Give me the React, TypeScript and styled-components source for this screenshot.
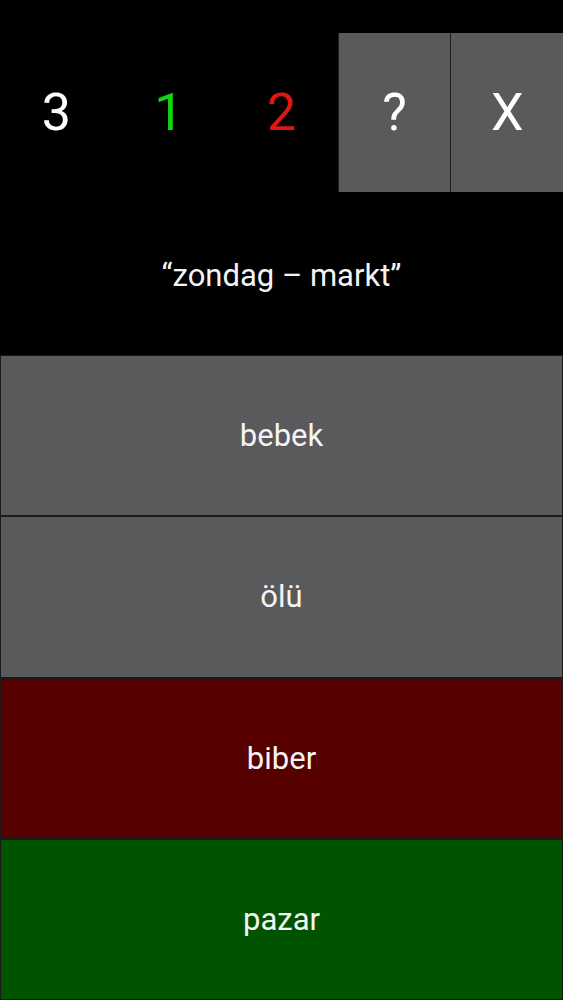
import styled, { createGlobalStyle } from "styled-components";

const GlobalStyle = createGlobalStyle`
  html, body {
    margin: 0;
    padding: 0;
    background: #000;
  }
  body {
    font-family: Roboto, "Liberation Sans", sans-serif;
  }
`;

const Screen = styled.div`
  width: 563px;
  height: 1000px;
  background: #000;
  display: flex;
  flex-direction: column;
  overflow: hidden;
`;

const Header = styled.div`
  height: 355px;
  display: flex;
  flex-direction: column;
`;

const TopBar = styled.div`
  margin-top: 33px;
  height: 159px;
  display: grid;
  grid-template-columns: repeat(5, 1fr);
`;

const Score = styled.div<{ $color: string }>`
  display: flex;
  align-items: center;
  justify-content: center;
  color: ${(p) => p.$color};
  font-size: 52px;
`;

const TopButton = styled.button`
  display: flex;
  align-items: center;
  justify-content: center;
  background: #5a595c;
  color: #fff;
  font-family: Roboto, "Liberation Sans", sans-serif;
  font-size: 52px;
  border: none;
  border-left: 1px solid #1c1c1c;
  padding: 0;
`;

const Prompt = styled.div`
  flex: 1;
  display: flex;
  align-items: center;
  justify-content: center;
  color: #f4f4f4;
  font-size: 31px;
  padding-top: 4px;
`;

const Answers = styled.div`
  flex: 1;
  display: flex;
  flex-direction: column;
`;

const Answer = styled.button<{ $bg: string }>`
  flex: 1;
  display: flex;
  align-items: center;
  justify-content: center;
  background: ${(p) => p.$bg};
  color: #f4f4f4;
  font-family: Roboto, "Liberation Sans", sans-serif;
  font-size: 31px;
  border: 1px solid #1a1a1a;
  padding: 0;
`;

const answers = [
  { word: "bebek", bg: "#5a595c" },
  { word: "ölü", bg: "#5a595c" },
  { word: "biber", bg: "#560000" },
  { word: "pazar", bg: "#005400" },
];

const App = () => {
  return (
    <>
      <GlobalStyle />
      <Screen>
        <Header>
          <TopBar>
            <Score $color="#ffffff">3</Score>
            <Score $color="#11d711">1</Score>
            <Score $color="#e41414">2</Score>
            <TopButton>?</TopButton>
            <TopButton>X</TopButton>
          </TopBar>
          <Prompt>“zondag – markt”</Prompt>
        </Header>
        <Answers>
          {answers.map((a) => (
            <Answer key={a.word} $bg={a.bg}>
              {a.word}
            </Answer>
          ))}
        </Answers>
      </Screen>
    </>
  );
};

export default App;
